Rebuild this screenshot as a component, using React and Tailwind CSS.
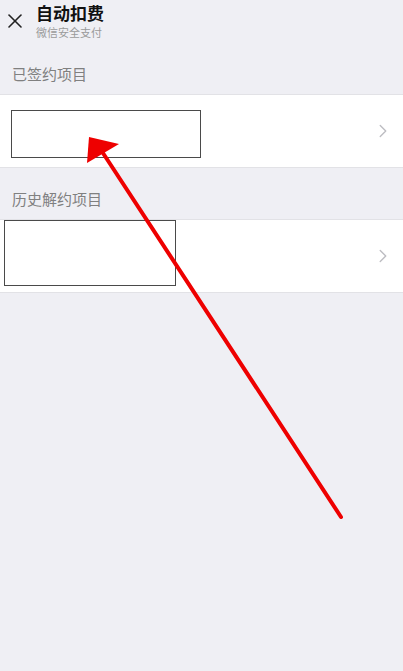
import { ChevronRight, X } from "lucide-react";

const font = { fontFamily: '"Noto Sans CJK SC", "Noto Sans", sans-serif' };

const Section = ({ title, headClass, children }) => (
  <div>
    <div className={`flex items-end pb-[9px] px-3 text-[15px] text-[#808080] ${headClass}`}>{title}</div>
    {children}
  </div>
);

const Row = ({ boxClass }) => (
  <div className="h-[74px] bg-white border-t border-b border-[#e2e2e6] flex items-center relative">
    <div className={`absolute border border-[#4a4a4a] bg-white ${boxClass}`} />
    <ChevronRight size={22} strokeWidth={1.5} className="ml-auto mr-[9px] text-[#bdbdc2]" />
  </div>
);

export default function App() {
  return (
    <div className="w-[403px] h-[671px] bg-[#efeff4] relative overflow-hidden" style={font}>
      {/* header */}
      <div className="h-[44px] flex items-start pt-[3px]">
        <X size={24} strokeWidth={1.6} className="ml-[3px] mt-[6px] text-[#222]" />
        <div className="ml-[9px] flex flex-col">
          <span className="text-[17px] leading-[20px] font-bold text-[#111]">自动扣费</span>
          <span className="mt-[3px] text-[11px] leading-[13px] text-[#9a9a9a]">微信安全支付</span>
        </div>
      </div>

      <Section title="已签约项目" headClass="h-[50px]">
        <Row boxClass="left-[11px] top-[15px] w-[190px] h-[48px]" />
      </Section>
      <Section title="历史解约项目" headClass="h-[51px]">
        <Row boxClass="left-[4px] top-[0px] w-[172px] h-[66px]" />
      </Section>

      {/* red arrow annotation */}
      <svg className="absolute inset-0 pointer-events-none" width="403" height="671" viewBox="0 0 403 671">
        <line x1="341" y1="517" x2="101" y2="150" stroke="#ee0000" strokeWidth="4" strokeLinecap="round" />
        <polygon points="89,137 119,144 87,163" fill="#ee0000" />
      </svg>
    </div>
  );
}
